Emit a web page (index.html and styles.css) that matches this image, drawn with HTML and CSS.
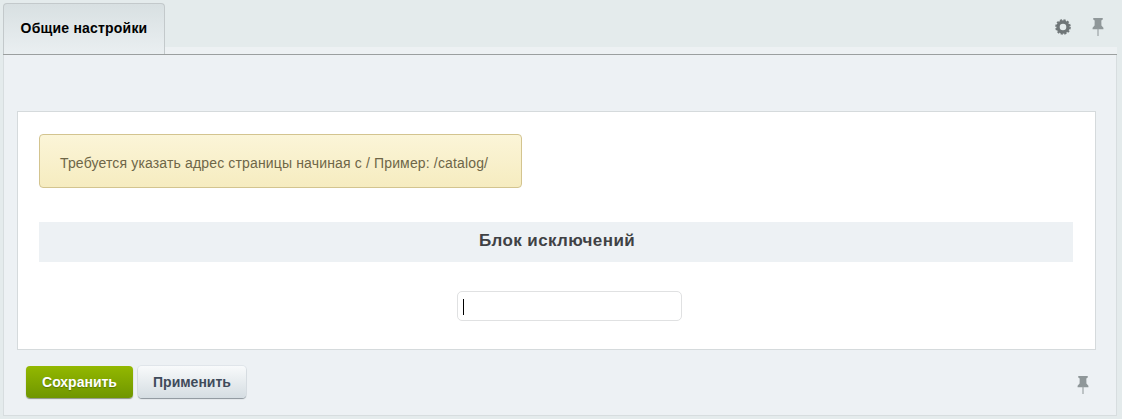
FILE: index.html
```html
<!DOCTYPE html>
<html lang="ru">
<head>
<meta charset="utf-8">
<title>Общие настройки</title>
<link rel="stylesheet" href="styles.css">
</head>
<body>
<div class="page">
  <header class="tabbar">
    <div class="tab">Общие настройки</div>
    <div class="tools">
      <svg class="icon gear" width="16" height="16" viewBox="0 0 16 16"><circle cx="8" cy="8" r="5" fill="none" stroke="#6f7678" stroke-width="3.4"/><circle cx="8" cy="8" r="7" fill="none" stroke="#6f7678" stroke-width="1.6" stroke-dasharray="2.2 1.5"/></svg>
      <svg class="icon" width="12" height="19" viewBox="0 0 12 20"><path d="M1 1h10v1.6L9.500 3.6 9.600 9l2.100 2.200V13H.3v-1.800L2.400 9 2.500 3.600 1 2.600z" fill="#8f9799"/><rect x="5.400" y="12" width="1.200" height="8" fill="#9aa1a3"/></svg>
    </div>
  </header>
  <main class="panel">
    <section class="card">
      <div class="note">Требуется указать адрес страницы начиная с / Пример: /catalog/</div>
      <h2 class="heading">Блок исключений</h2>
      <div class="field"><div class="input"><span class="caret"></span></div></div>
    </section>
    <footer class="actions">
      <button class="btn btn-save">Сохранить</button>
      <button class="btn btn-apply">Применить</button>
      <svg class="icon pin-bottom" width="12" height="19" viewBox="0 0 12 20"><path d="M1 1h10v1.6L9.500 3.6 9.600 9l2.100 2.200V13H.3v-1.800L2.400 9 2.500 3.600 1 2.600z" fill="#8f9799"/><rect x="5.400" y="12" width="1.200" height="8" fill="#9aa1a3"/></svg>
    </footer>
  </main>
</div>
</body>
</html>
```

FILE: styles.css
```css
* { box-sizing: border-box; }
html, body { margin: 0; padding: 0; }
body {
  width: 1122px;
  height: 419px;
  overflow: hidden;
  background: #e4ebec;
  font-family: "Liberation Sans", Arial, sans-serif;
}
.page { padding: 3px 5px 0 3px; }
.tabbar {
  display: flex;
  justify-content: space-between;
  height: 52px;
  border-bottom: 1px solid #9b9f9f;
  background: linear-gradient(to bottom, transparent 0, transparent 44px, #edf1f3 44px);
}
.tab {
  width: 162px;
  height: 51px;
  padding-top: 16px;
  text-align: center;
  font-size: 14px;
  font-weight: bold;
  letter-spacing: .2px;
  line-height: 16px;
  color: #000;
  border: 1px solid #c3c9cb;
  border-bottom: 0;
  border-radius: 4px 4px 0 0;
  background: linear-gradient(to bottom, #d8e0e2, #eaeff1);
}
.tools {
  display: flex;
  align-items: flex-start;
  gap: 21px;
  padding: 14px 13px 0 0;
}
.gear { margin-top: 2px; }
.icon { display: block; flex: none; }
.panel {
  height: 361px;
  padding: 56px 20px 0 14px;
  background: #edf1f4;
  border: solid #d7dddf;
  border-width: 0 1px 1px 1px;
}
.card {
  width: 1079px;
  height: 239px;
  margin-left: -1px;
  padding: 22px 22px 0 21px;
  background: #fff;
  border: 1px solid #d5dadc;
}
.note {
  width: 483px;
  height: 54px;
  padding-left: 20px;
  font-size: 14px;
  letter-spacing: .15px;
  line-height: 56px;
  color: #6e6647;
  border: 1px solid #d3c48f;
  border-radius: 4px;
  background: linear-gradient(to bottom, #fbf5d8, #f6ecc0);
}
.heading {
  height: 40px;
  margin: 34px 0 0;
  padding-left: 2px;
  text-align: center;
  font-size: 17px;
  font-weight: bold;
  letter-spacing: .4px;
  line-height: 37px;
  color: #3f4144;
  background: #edf1f4;
}
.field { display: flex; justify-content: center; padding: 29px 0 0; }
.input {
  position: relative;
  width: 225px;
  height: 30px;
  margin-left: 27px;
  background: #fff;
  border: 1px solid #e0e1e2;
  border-radius: 5px;
}
.caret {
  position: absolute;
  left: 5px;
  top: 7px;
  width: 1px;
  height: 16px;
  background: #000;
}
.actions {
  display: flex;
  align-items: flex-start;
  gap: 5px;
  padding: 16px 0 0 8px;
}
.btn {
  height: 32px;
  padding: 0;
  font-family: inherit;
  font-size: 14px;
  font-weight: bold;
  border-radius: 4px;
  border: 0;
}
.btn-save {
  width: 107px;
  color: #fff;
  text-shadow: 0 1px 1px rgba(70, 90, 0, .6);
  background: linear-gradient(to bottom, #93b800, #6f9600);
  box-shadow: 0 1px 1px rgba(60, 70, 40, .55);
}
.btn-apply {
  width: 108px;
  color: #3f4b5b;
  background: linear-gradient(to bottom, #f8fafb, #d5dde2);
  box-shadow: 0 1px 1px rgba(70, 80, 90, .55), 0 0 0 1px rgba(215, 222, 226, .6);
}
.pin-bottom { margin: 9px 0 0 auto; transform: translateX(-7px); }
```
